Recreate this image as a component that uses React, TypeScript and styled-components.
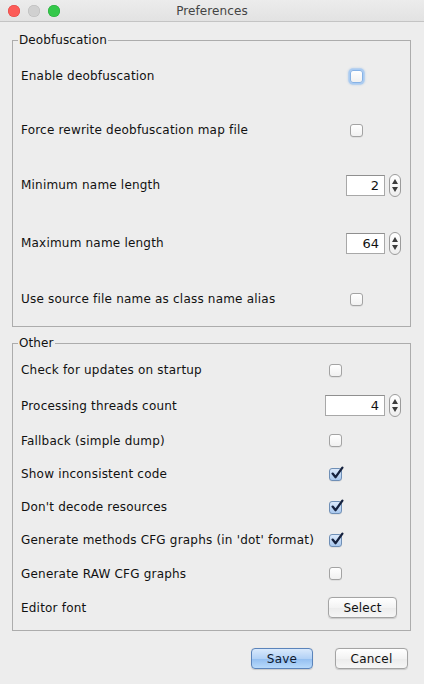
import React from "react"
import styled, { createGlobalStyle, css } from "styled-components"

const GlobalStyle = createGlobalStyle`
  html, body {
    margin: 0;
    padding: 0;
    background: #ededed;
  }
  body {
    font-family: "DejaVu Sans", "Liberation Sans", sans-serif;
    font-size: 12px;
    color: #111;
  }
`

const Window = styled.div`
  width: 424px;
  height: 684px;
  display: flex;
  flex-direction: column;
  background: #ededed;
  overflow: hidden;
`

const TitleBar = styled.div`
  height: 21px;
  border-bottom: 1px solid #c4c4c4;
  background: linear-gradient(#ececec, #e2e2e2);
  display: grid;
  grid-template-columns: 1fr auto 1fr;
  align-items: center;
`

const Lights = styled.div`
  display: flex;
  gap: 8px;
  padding-left: 8px;
`

const Light = styled.span<{ $color: string; $edge: string }>`
  width: 12px;
  height: 12px;
  border-radius: 50%;
  background: ${(p) => p.$color};
  box-shadow: inset 0 0 0 0.5px ${(p) => p.$edge};
`

const Title = styled.div`
  font-size: 12px;
  letter-spacing: 0.1px;
  color: #444;
  padding-top: 1px;
`

const Group = styled.fieldset<{ $first?: boolean }>`
  margin: ${(p) => (p.$first ? "10px" : "8px")} 13px 0 12px;
  padding: 0 9px 0 8px;
  border: 1px solid #acacac;
  min-width: 0;
`

const Legend = styled.legend`
  margin-left: -3px;
  padding: 0 1px;
  font-size: 12px;
  line-height: 16px;
  letter-spacing: 0.1px;
  color: #111;
`

const Rows = styled.div<{ $rows: string; $top: number; $bottom: number }>`
  display: grid;
  grid-template-columns: 1fr auto;
  grid-template-rows: ${(p) => p.$rows};
  align-items: center;
  padding: ${(p) => p.$top}px 0 ${(p) => p.$bottom}px;
`

const Label = styled.span`
  white-space: nowrap;
  letter-spacing: 0.2px;
  color: #111;
`

const Control = styled.div`
  justify-self: start;
  display: flex;
  align-items: center;
`

const Box = styled.span<{ $checked?: boolean; $focused?: boolean }>`
  position: relative;
  width: 11px;
  height: 11px;
  margin-left: 4px;
  border-radius: 3px;
  border: 1px solid #a3a3a3;
  background: linear-gradient(#ffffff, #f1f1f1);
  box-shadow: 0 0.5px 0.5px rgba(0, 0, 0, 0.12);
  ${(p) =>
    p.$checked &&
    css`
      border-color: #6f8fb6;
      background: linear-gradient(#dbe9fb, #a9c8ee);
    `}
  ${(p) =>
    p.$focused &&
    css`
      border-color: #86b2e6;
      box-shadow: 0 0 0 1.5px #a9cbf2, 0 0 2px 2px rgba(120, 170, 230, 0.45);
    `}

  svg {
    position: absolute;
    left: 1px;
    top: -3px;
  }
`

const Check = ({ checked, focused }: { checked?: boolean; focused?: boolean }) => (
  <Box $checked={checked} $focused={focused}>
    {checked && (
      <svg width="13" height="14" viewBox="0 0 13 14">
        <path d="M1.6 7.6 L4.6 11.2 L11.4 1.6" fill="none" stroke="#16223e" strokeWidth="2.3" strokeLinecap="round" strokeLinejoin="round" />
      </svg>
    )}
  </Box>
)

const Spinner = styled.div`
  display: flex;
  align-items: center;
  gap: 4px;
`

const Field = styled.div<{ $width: number }>`
  width: ${(p) => p.$width}px;
  height: 21px;
  box-sizing: border-box;
  border: 1px solid #a8a8a8;
  border-top-color: #8f8f8f;
  background: #fff;
  font-size: 13px;
  line-height: 19px;
  text-align: right;
  padding-right: 5px;
  color: #111;
`

const Arrows = styled.div`
  width: 10px;
  height: 21px;
  border: 1px solid #9c9c9c;
  border-radius: 6px;
  background: linear-gradient(#ffffff, #eeeeee);
  display: flex;
  flex-direction: column;
  align-items: center;
  justify-content: center;
  gap: 3px;
`

const Arrow = ({ down }: { down?: boolean }) => (
  <svg width="6" height="5" viewBox="0 0 6 5">
    <path d={down ? "M0 0 L6 0 L3 5 Z" : "M0 5 L6 5 L3 0 Z"} fill="#3c3c3c" />
  </svg>
)

const NumberSpinner = ({ value, width }: { value: number; width: number }) => (
  <Spinner>
    <Field $width={width}>{value}</Field>
    <Arrows>
      <Arrow />
      <Arrow down />
    </Arrows>
  </Spinner>
)

const Button = styled.button<{ $width: number; $primary?: boolean }>`
  width: ${(p) => p.$width}px;
  height: 21px;
  padding: 0;
  border-radius: 4px;
  border: 1px solid #a4a4a4;
  background: linear-gradient(#ffffff, #f3f3f3 50%, #ececec 51%, #f6f6f6);
  box-shadow: 0 0.5px 1px rgba(0, 0, 0, 0.15);
  font-family: "DejaVu Sans", "Liberation Sans", sans-serif;
  font-size: 12px;
  letter-spacing: 0.2px;
  color: #111;
  ${(p) =>
    p.$primary &&
    css`
      border-color: #5b84bb;
      color: #0c1830;
      background: linear-gradient(#d9e9fc, #b3d2f6 50%, #93bef0 51%, #b8dafb);
    `}
`

const SelectButton = styled(Button)`
  margin-left: 3px;
`

const Footer = styled.div`
  display: flex;
  justify-content: flex-end;
  gap: 22px;
  margin-top: 17px;
  padding-right: 16px;
`

const App = () => {
  return (
    <>
      <GlobalStyle />
      <Window>
        <TitleBar>
          <Lights>
            <Light $color="#fc5b57" $edge="#de4440" />
            <Light $color="#d0d0d0" $edge="#b8b8b8" />
            <Light $color="#34c84a" $edge="#25a838" />
          </Lights>
          <Title>Preferences</Title>
          <div />
        </TitleBar>

        <Group $first>
          <Legend>Deobfuscation</Legend>
          <Rows $rows="56px 52px 58px 58px 54px" $top={0} $bottom={0}>
            <Label>Enable deobfuscation</Label>
            <Control>
              <Check focused />
            </Control>
            <Label>Force rewrite deobfuscation map file</Label>
            <Control>
              <Check />
            </Control>
            <Label>Minimum name length</Label>
            <Control>
              <NumberSpinner value={2} width={39} />
            </Control>
            <Label>Maximum name length</Label>
            <Control>
              <NumberSpinner value={64} width={39} />
            </Control>
            <Label>Use source file name as class name alias</Label>
            <Control>
              <Check />
            </Control>
          </Rows>
        </Group>

        <Group>
          <Legend>Other</Legend>
          <Rows $rows="35px 36px 34px 33px 33px 33px 34px 34px" $top={1.5} $bottom={5.5}>
            <Label>Check for updates on startup</Label>
            <Control>
              <Check />
            </Control>
            <Label>Processing threads count</Label>
            <Control>
              <NumberSpinner value={4} width={60} />
            </Control>
            <Label>Fallback (simple dump)</Label>
            <Control>
              <Check />
            </Control>
            <Label>Show inconsistent code</Label>
            <Control>
              <Check checked />
            </Control>
            <Label>Don't decode resources</Label>
            <Control>
              <Check checked />
            </Control>
            <Label>Generate methods CFG graphs (in 'dot' format)</Label>
            <Control>
              <Check checked />
            </Control>
            <Label>Generate RAW CFG graphs</Label>
            <Control>
              <Check />
            </Control>
            <Label>Editor font</Label>
            <Control>
              <SelectButton $width={69}>Select</SelectButton>
            </Control>
          </Rows>
        </Group>

        <Footer>
          <Button $width={62} $primary>
            Save
          </Button>
          <Button $width={73}>Cancel</Button>
        </Footer>
      </Window>
    </>
  )
}

export default App
